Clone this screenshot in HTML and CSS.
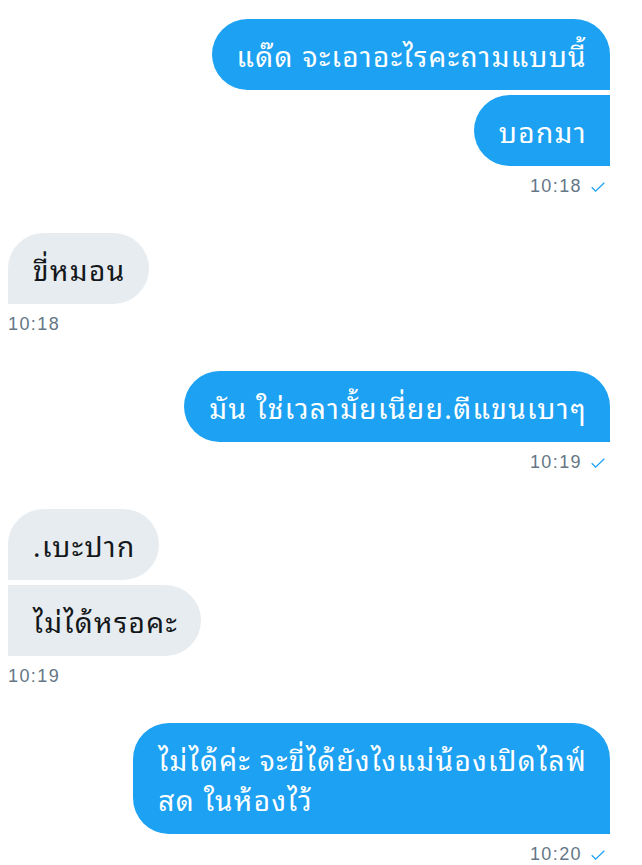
FILE: index.html
```html
<!DOCTYPE html>
<html lang="th">
<head>
<meta charset="utf-8">
<link rel="stylesheet" href="styles.css">
</head>
<body>
<div class="chat">
  <div class="group sent">
    <div class="bubble first">แด๊ด จะเอาอะไรคะถามแบบนี้</div>
    <div class="bubble next">บอกมา</div>
    <div class="meta"><span>10:18</span><svg class="check" viewBox="0 0 14 10" width="14" height="10"><polyline points="0.7,5.2 4.6,9.1 13.3,0.7" fill="none" stroke="#1DA1F2" stroke-width="1.3"/></svg></div>
  </div>
  <div class="group recv">
    <div class="bubble first">ขี่หมอน</div>
    <div class="meta"><span>10:18</span></div>
  </div>
  <div class="group sent">
    <div class="bubble first">มัน ใช่เวลามั้ยเนี่ยย.ตีแขนเบาๆ</div>
    <div class="meta"><span>10:19</span><svg class="check" viewBox="0 0 14 10" width="14" height="10"><polyline points="0.7,5.2 4.6,9.1 13.3,0.7" fill="none" stroke="#1DA1F2" stroke-width="1.3"/></svg></div>
  </div>
  <div class="group recv">
    <div class="bubble first">.เบะปาก</div>
    <div class="bubble next">ไม่ได้หรอคะ</div>
    <div class="meta"><span>10:19</span></div>
  </div>
  <div class="group sent">
    <div class="bubble first">ไม่ได้ค่ะ จะขี่ได้ยังไงแม่น้องเปิดไลฟ์<br>สด ในห้องไว้</div>
    <div class="meta"><span>10:20</span><svg class="check" viewBox="0 0 14 10" width="14" height="10"><polyline points="0.7,5.2 4.6,9.1 13.3,0.7" fill="none" stroke="#1DA1F2" stroke-width="1.3"/></svg></div>
  </div>
</div>
</body>
</html>
```
FILE: styles.css
```css
html, body {
  margin: 0;
  padding: 0;
  background: #ffffff;
}
.chat {
  display: flex;
  flex-direction: column;
  padding: 19px 32px 0 8px;
  gap: 37px;
}
.group {
  display: flex;
  flex-direction: column;
  gap: 5px;
}
.sent { align-items: flex-end; }
.recv { align-items: flex-start; }
.bubble {
  font-family: "Noto Sans Thai Looped", "Loma", "Garuda", "Noto Sans Thai", "Noto Sans", "DejaVu Sans", sans-serif;
  font-size: 28px;
  letter-spacing: 1.4px;
  line-height: 40px;
  padding: 15.5px 23px 15.5px 25px;
  border-radius: 36px;
  white-space: nowrap;
}
.sent .bubble {
  background: #1DA1F2;
  color: #ffffff;
  border-bottom-right-radius: 0;
}
.sent .bubble.next { border-top-right-radius: 0; }
.recv .bubble {
  background: #E6ECF0;
  color: #14171A;
  border-bottom-left-radius: 0;
}
.recv .bubble.next { border-top-left-radius: 0; }
.meta {
  margin-top: 5px;
  font-family: "Liberation Sans", Arial, sans-serif;
  font-size: 18px;
  letter-spacing: 1.4px;
  line-height: 20px;
  color: #657786;
  display: flex;
  align-items: center;
  gap: 9px;
}
.sent .meta { margin-right: 5px; }
.check { display: block; margin-top: 2px; }
```
